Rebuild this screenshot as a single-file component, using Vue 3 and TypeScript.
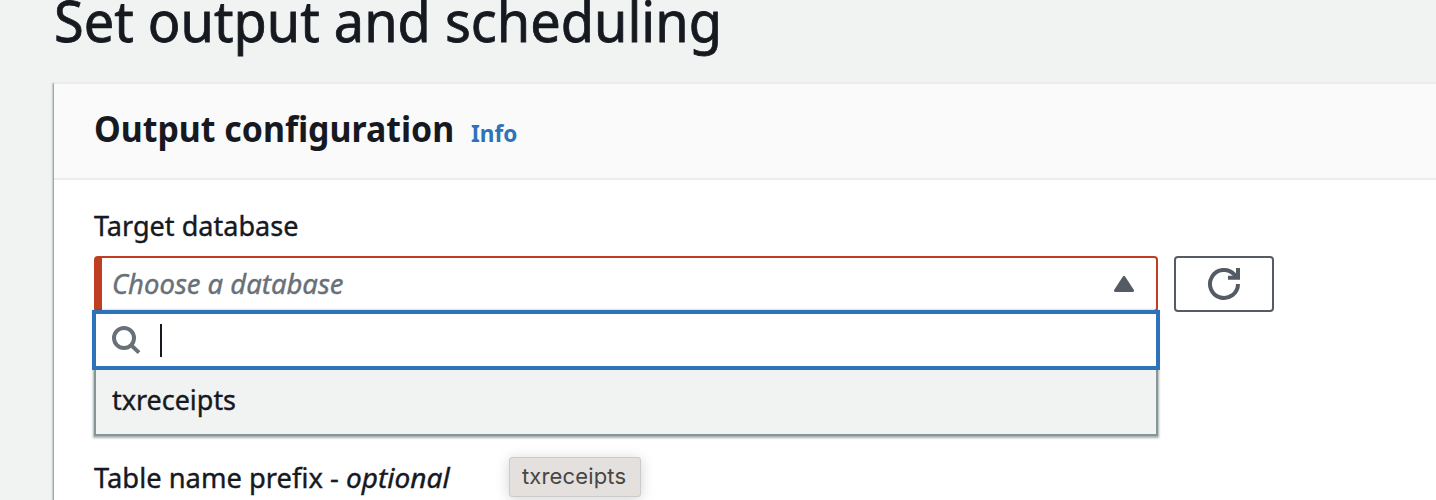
<script setup lang="ts">
import { ref } from 'vue'

const placeholder = 'Choose a database'
const options = ref<string[]>(['txreceipts'])
</script>

<template>
  <main class="page">
    <h1 class="title"><span class="t t-title">Set output and scheduling</span></h1>
    <section class="panel">
      <header class="panel-header">
        <h2><span class="t t-head">Output configuration</span></h2>
        <a class="info"><span class="t t-info">Info</span></a>
      </header>
      <div class="panel-body">
        <label class="label"><span class="t t-label">Target database</span></label>
        <div class="row">
          <div class="select-wrap">
            <div class="select">
              <span class="placeholder t t-place">{{ placeholder }}</span>
              <svg class="caret" width="20" height="16" viewBox="0 0 20 16">
                <path d="M10 1.5 18.5 14.5H1.5Z" fill="#545b64" stroke="#545b64" stroke-width="3" stroke-linejoin="round" />
              </svg>
            </div>
            <div class="dropdown">
              <div class="search">
                <svg width="32" height="32" viewBox="0 0 32 32" fill="none" stroke="#687078" stroke-width="4">
                  <circle cx="13" cy="14" r="10" />
                  <path d="M20 21l8 7.6" />
                </svg>
                <span class="cursor"></span>
              </div>
              <div v-for="option in options" :key="option" class="option">
                <span class="t t-option">{{ option }}</span>
              </div>
            </div>
          </div>
          <button class="refresh" type="button" aria-label="Refresh">
            <svg width="34" height="34" viewBox="0 0 34 34" fill="none" stroke="#545b64" stroke-width="4">
              <path d="M31 17A14 14 0 1 1 27.2 7.4L30 10.5" />
              <path d="M31 1V10.7H21" />
            </svg>
          </button>
        </div>
        <div class="label prefix">
          <span class="t t-prefix">Table name prefix - </span><em class="t t-opt">optional</em>
          <span class="tooltip">{{ options[0] }}</span>
        </div>
      </div>
    </section>
  </main>
</template>

<style>
body { margin: 0; overflow: hidden; background: #f1f3f3; }
</style>

<style scoped>
.page {
  box-sizing: border-box;
  height: 500px;
  overflow: hidden;
  background: #f1f3f3;
  color: #16191f;
  font-family: "Noto Sans", "Open Sans", sans-serif;
  font-size: 28px;
}
h1, h2 { margin: 0; }
.t { display: inline-block; white-space: pre; transform-origin: left; -webkit-text-stroke: .4px currentColor; }
.title {
  height: 82px;
  padding-left: 54px;
  font-size: 56px;
  font-weight: 400;
  line-height: 40px;
}
.t-title { transform: scaleX(.966); -webkit-text-stroke-width: .8px; }
.t-head { transform: scaleX(.94); -webkit-text-stroke-width: 0; }
.t-info { transform: scaleX(.94); -webkit-text-stroke-width: 0; }
.t-label { transform: scaleX(.966); }
.t-place { transform: scaleX(.98); }
.t-option { transform: scaleX(.962); }
.t-prefix { transform: scaleX(.976); }
.t-opt { margin-left: -6px; }
.panel {
  margin-left: 54px;
  height: 430px;
  background: #fff;
  border-top: 2px solid #eaeded;
  box-shadow: -1px 1px 2px rgba(0, 28, 36, .5);
  clip-path: inset(0 0 0 -4px);
}
.panel-header {
  box-sizing: border-box;
  height: 96px;
  padding: 0 40px;
  display: flex;
  align-items: baseline;
  line-height: 89px;
  background: #fafafa;
  border-bottom: 2px solid #eaeded;
}
h2 { font-size: 36px; font-weight: 700; margin-right: -6px; }
.info { color: #2e73b8; font-size: 24px; font-weight: 700; }
.panel-body { padding: 25px 40px 0; }
.label { display: block; height: 40px; line-height: 40px; }
.row { display: flex; gap: 16px; margin-top: 11px; }
.select-wrap { position: relative; width: 1064px; }
.select {
  box-sizing: border-box;
  height: 56px;
  padding: 0 22px 0 10px;
  display: flex;
  align-items: center;
  justify-content: space-between;
  border: 2px solid #bf3e22;
  border-left-width: 8px;
  border-radius: 4px;
}
.placeholder { color: #687078; font-style: italic; line-height: 40px; padding-bottom: 2px; }
.dropdown {
  position: absolute;
  z-index: 1;
  top: 54px;
  left: 0;
  box-sizing: border-box;
  width: 1064px;
  height: 126px;
  border: 2px solid #879596;
  border-top: 0;
  background: #f1f3f3;
  box-shadow: 0 1px 2px 1px rgba(0, 28, 36, .35);
}
.search {
  box-sizing: border-box;
  height: 60px;
  margin: 0 -4px;
  padding-left: 15px;
  display: flex;
  align-items: center;
  gap: 17px;
  background: #fff;
  border: 4px solid #2e73b8;
}
.cursor { width: 2px; height: 33px; background: #16191f; }
.option { padding: 9px 16px; line-height: 40px; }
.refresh {
  box-sizing: border-box;
  width: 100px;
  height: 56px;
  padding: 0;
  display: flex;
  align-items: center;
  justify-content: center;
  background: #fff;
  border: 2px solid #545b64;
  border-radius: 4px;
}
.prefix { position: relative; margin-top: 145px; }
.tooltip {
  position: absolute;
  left: 415px;
  top: 0;
  box-sizing: border-box;
  width: 132px;
  height: 40px;
  padding-left: 12px;
  line-height: 37px;
  color: #474644;
  background: #e4e0dd;
  border: 1px solid #cdcbc9;
  border-radius: 3px;
  box-shadow: 0 2px 14px rgba(0, 0, 0, .18);
  font-family: Inter, sans-serif;
  font-size: 22px;
  letter-spacing: .15px;
}
</style>
